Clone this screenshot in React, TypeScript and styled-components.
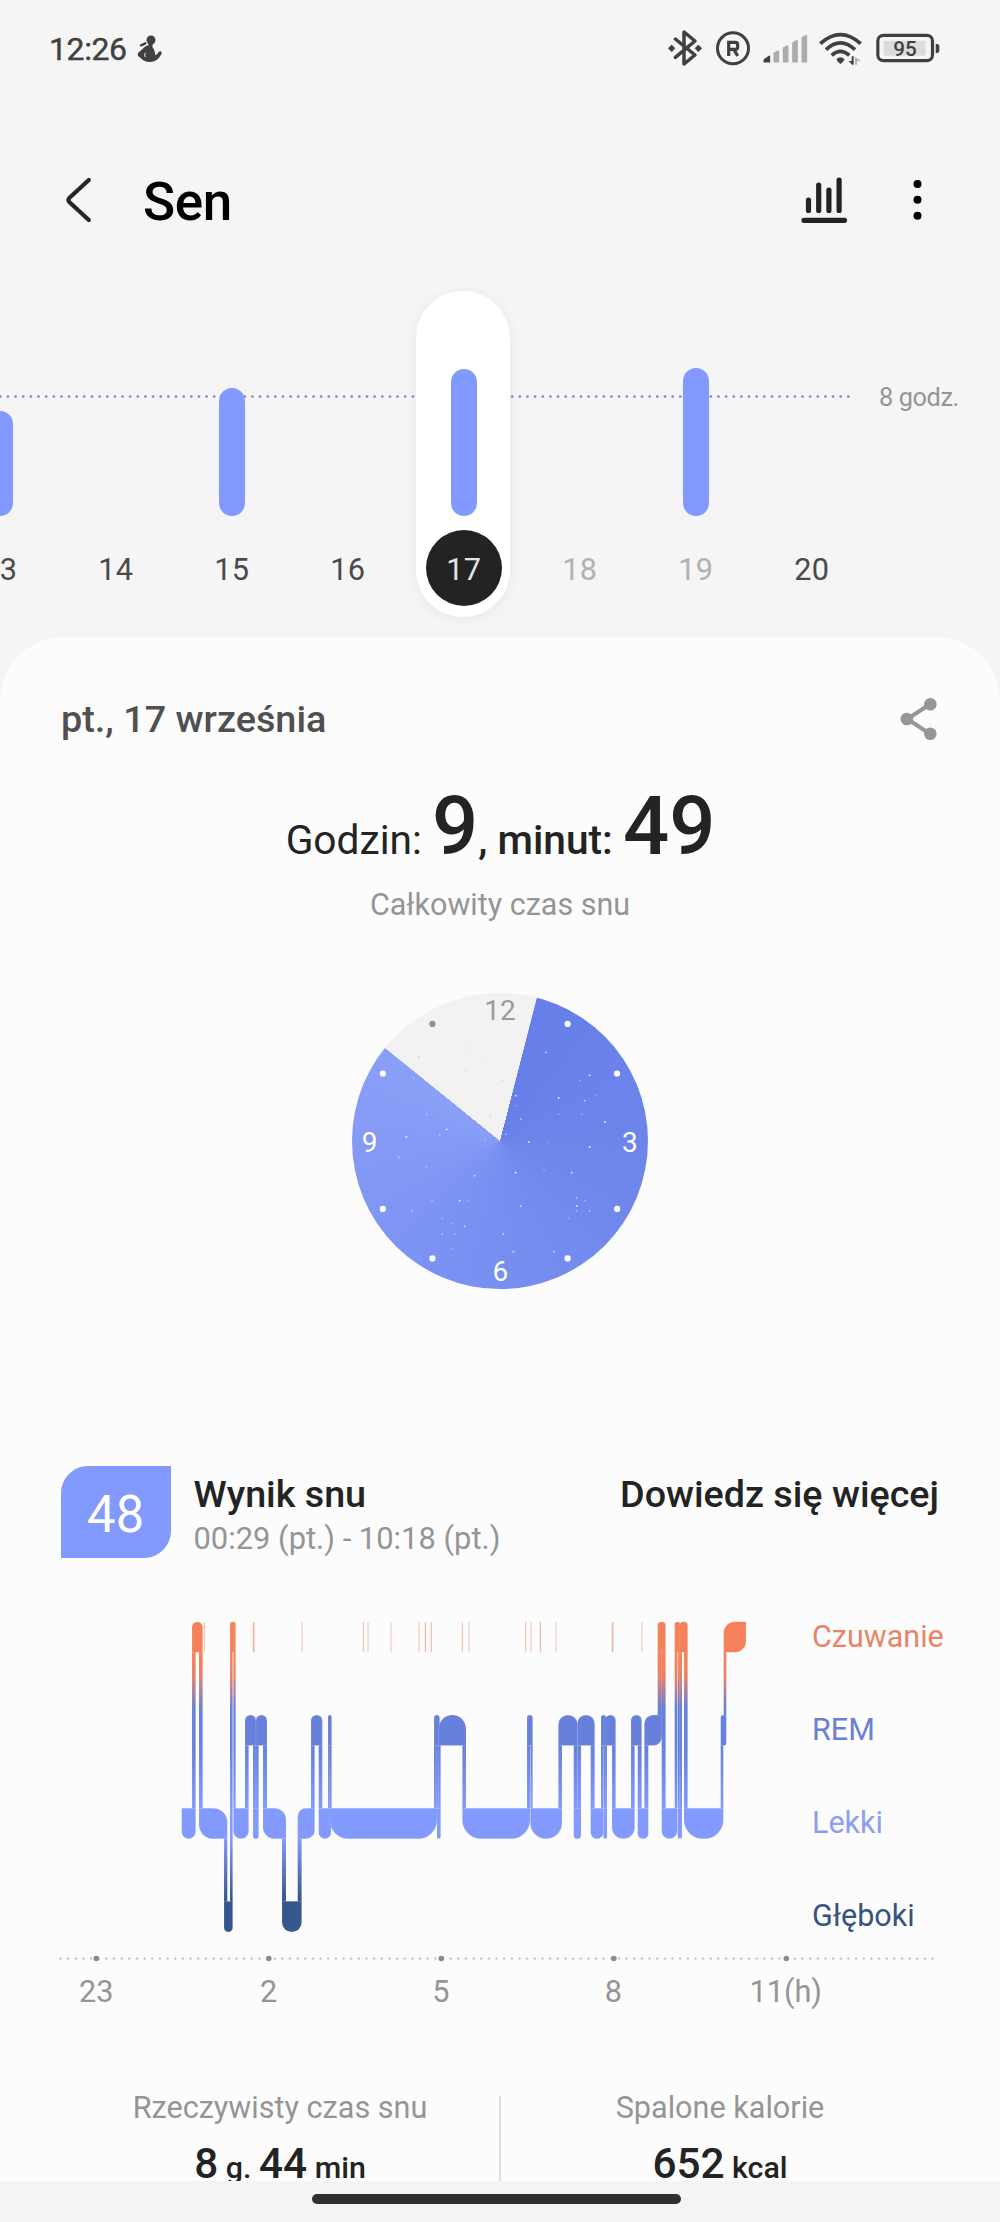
import React from "react";
import styled, { createGlobalStyle } from "styled-components";

const GlobalStyle = createGlobalStyle`
  *, *::before, *::after { box-sizing: border-box; }
  body { margin: 0; background: #f5f5f5; font-family: Roboto, "Noto Sans", sans-serif; }
  svg { display: block; overflow: visible; }
`;

const colors = {
  wake: "#f5815b",
  rem: "#6680db",
  light: "#8299fd",
  deep: "#35578b",
  ink: "#232323",
  muted: "#959595",
};

const Screen = styled.main`
  width: 1000px;
  height: 2222px;
  display: flex;
  flex-direction: column;
  overflow: hidden;
  background: #f5f5f5;
`;

/* ---------- status bar ---------- */

const StatusBar = styled.div`
  height: 98px;
  flex: none;
  display: flex;
  align-items: center;
  justify-content: space-between;
  padding: 0 60px 0 49px;
`;

const StatusLeft = styled.div`
  display: flex;
  align-items: center;
  gap: 10px;
`;

const Time = styled.span`
  font-size: 32px;
  line-height: 40px;
  font-weight: 400;
  letter-spacing: -0.4px;
  color: #404040;
  -webkit-text-stroke: 0.4px #404040;
`;

const StatusIcons = styled.div`
  display: flex;
  align-items: center;
  gap: 14px;
  padding-bottom: 1px;
`;

const SignalSlot = styled.div`
  margin: 0 -3px 0 -1px;
`;

/* ---------- header ---------- */

const Header = styled.header`
  height: 204px;
  flex: none;
  display: flex;
  align-items: center;
  padding: 0 78px 0 65px;
`;

const Title = styled.h1`
  margin: 4px auto 0 52px;
  font-size: 53px;
  line-height: 64px;
  font-weight: 500;
  letter-spacing: -0.4px;
  color: #000;
`;

const HeaderActions = styled.div`
  display: flex;
  align-items: center;
  gap: 66px;
`;

/* ---------- week strip ---------- */

const Week = styled.section`
  position: relative;
  height: 335px;
  flex: none;
`;

const GoalLine = styled.div`
  position: absolute;
  left: 0;
  right: 61px;
  top: 75px;
  height: 40px;
  display: flex;
  align-items: center;
  justify-content: space-between;
`;

const GoalLabel = styled.span`
  width: 60px;
  margin-top: 2px;
  font-size: 25.3px;
  line-height: 40px;
  letter-spacing: -0.4px;
  color: ${colors.muted};
  white-space: nowrap;
`;

const Days = styled.div`
  position: relative;
  display: flex;
  width: 928px;
  margin-left: -58.3px;
`;

const Day = styled.div`
  position: relative;
  width: 116px;
  height: 335px;
  display: flex;
  flex-direction: column;
  align-items: center;
`;

const Capsule = styled.div`
  position: absolute;
  top: -11px;
  left: 10px;
  width: 94.5px;
  height: 326px;
  border-radius: 48px;
  background: #fff;
  box-shadow: 0 2px 14px rgba(0, 0, 0, 0.06);
`;

const BarArea = styled.div`
  position: relative;
  height: 214px;
  display: flex;
  align-items: flex-end;
`;

const DayBar = styled.div<{ $height: number }>`
  width: 26px;
  height: ${(p) => p.$height}px;
  border-radius: 13px;
  background: ${colors.light};
`;

const DayNumber = styled.div<{ $tone: "normal" | "dim" | "selected" }>`
  position: relative;
  margin-top: 14px;
  width: 76px;
  height: 76px;
  border-radius: 50%;
  display: flex;
  align-items: center;
  justify-content: center;
  padding-top: 2px;
  font-size: 30.7px;
  letter-spacing: 0.2px;
  background: ${(p) => (p.$tone === "selected" ? colors.ink : "transparent")};
  color: ${(p) =>
    p.$tone === "selected" ? "#e3e3e3" : p.$tone === "dim" ? "#b2b2b2" : "#4a4a4a"};
`;

/* ---------- detail panel ---------- */

const Panel = styled.section`
  height: 1544px;
  flex: none;
  overflow: hidden;
  padding: 52px 61px 0;
  border-radius: 64px 64px 0 0;
  background: #fcfcfc;
`;

const DateRow = styled.div`
  height: 60px;
  display: flex;
  align-items: center;
  justify-content: space-between;
`;

const DateText = styled.h2`
  margin: 0;
  font-size: 37.8px;
  line-height: 60px;
  font-weight: 500;
  color: #505050;
`;

const Total = styled.div`
  height: 100px;
  margin: 28px 0 0 1px;
  text-align: center;
  font-size: 81.3px;
  line-height: 100px;
  font-weight: 500;
  color: ${colors.ink};
  white-space: nowrap;
`;

const TotalUnit = styled.span<{ $weight: number }>`
  font-size: 40.7px;
  line-height: 0;
  font-weight: ${(p) => p.$weight};
`;

const TotalCaption = styled.div`
  height: 40px;
  margin-top: 8px;
  text-align: center;
  font-size: 30.5px;
  line-height: 40px;
  color: ${colors.muted};
`;

const Dial = styled.div`
  width: 296px;
  height: 296px;
  margin: 68px auto 0;
  border-radius: 50%;
  background: conic-gradient(
    #f2f2f2 0deg 14.3deg,
    #667ee8 14.6deg,
    #7088ec 120deg,
    #7991f2 200deg,
    #8a9ff7 308.8deg,
    #f2f2f2 309.1deg 360deg
  );
`;

const ScoreRow = styled.div`
  height: 92px;
  margin-top: 177px;
  display: flex;
`;

const ScoreBadge = styled.div`
  width: 109.5px;
  height: 92px;
  display: flex;
  align-items: center;
  justify-content: center;
  padding-top: 4px;
  border-radius: 27px 0;
  background: ${colors.light};
  color: #fff;
  font-size: 51px;
`;

const ScoreText = styled.div`
  margin-left: 23px;
  padding-top: 5px;
  display: flex;
  flex-direction: column;
  gap: 1px;
`;

const Strong = styled.div`
  font-size: 37.7px;
  line-height: 46px;
  font-weight: 500;
  color: ${colors.ink};
  white-space: nowrap;
`;

const Range = styled.div`
  font-size: 30.9px;
  line-height: 42px;
  color: ${colors.muted};
  white-space: nowrap;
`;

const MoreLink = styled(Strong)`
  margin: 5px 0 0 auto;
`;

const StageChart = styled.div`
  height: 350px;
  margin-top: 42px;
  display: flex;
  justify-content: space-between;
`;

const Legend = styled.div`
  width: 127px;
  padding-top: 17px;
  display: flex;
  flex-direction: column;
  gap: 53.1px;
`;

const LegendItem = styled.span<{ $color: string }>`
  font-size: 30.5px;
  line-height: 40px;
  color: ${(p) => p.$color};
  white-space: nowrap;
`;

const AxisLabels = styled.div`
  display: grid;
  grid-template-columns: repeat(5, 172.4px);
  margin: 4px 0 0 -51px;
`;

const AxisLabel = styled.span`
  font-size: 30.7px;
  line-height: 40px;
  text-align: center;
  color: ${colors.muted};
`;

const Stats = styled.div`
  margin-top: 76px;
  display: grid;
  grid-template-columns: 1fr 2px 1fr;
`;

const Divider = styled.div`
  margin-top: 8px;
  background: #dfdfdf;
`;

const Stat = styled.div`
  text-align: center;
`;

const StatLabel = styled.div`
  font-size: 30.6px;
  line-height: 40px;
  color: ${colors.muted};
`;

const StatValue = styled.div`
  margin-top: 11px;
  height: 50px;
  font-size: 42.3px;
  line-height: 50px;
  font-weight: 500;
  color: ${colors.ink};
`;

const StatUnit = styled.span`
  font-size: 30.4px;
  line-height: 0;
`;

const NavBar = styled.footer`
  flex: 1;
  display: flex;
  justify-content: center;
  padding: 13px 7px 0 0;
  background: #f4f4f4;
`;

const NavHandle = styled.div`
  width: 369px;
  height: 10px;
  border-radius: 5px;
  background: #303030;
`;

/* ---------- icons ---------- */

const dark = "#404040";

const FigureIcon = () => (
  <svg width="25" height="28" viewBox="413 103 75 84">
    <circle cx="455" cy="118" r="13.5" fill={dark} />
    <path d="M447 128 L461 128 L459 139 Q467 146 467 164 L474 160 Q478 150 484 152 Q490 155 484 164 Q474 184 452 184 Q434 184 424 172 Q411 164 417 156 L436 139 Q443 134 447 135Z" fill={dark} />
    <path d="M425 134 L438 128" stroke={dark} strokeWidth="7" strokeLinecap="round" />
    <path d="M439 156 Q433 161 438 169" stroke="#f5f5f5" strokeWidth="3" fill="none" />
  </svg>
);

const BluetoothIcon = () => (
  <svg width="34" height="37" viewBox="205 90 102 111">
    <path d="M227 117 L286 165 L253 192 V96 L286 123 L227 172" fill="none" stroke={dark} strokeWidth="10.5" strokeLinejoin="round" strokeLinecap="round" />
    <path d="M206 145 L216 135 L226 145 L216 155Z M286 145 L296 135 L306 145 L296 155Z" fill={dark} stroke={dark} strokeWidth="2" strokeLinejoin="round" />
  </svg>
);

const RegisteredIcon = () => (
  <svg width="34" height="37" viewBox="348 90 102 111">
    <circle cx="399" cy="145" r="46.5" fill="none" stroke={dark} strokeWidth="9" />
    <path d="M386 168 V127 H406 Q413 127 413 134 V141 Q413 148 406 148 H386 M402 149 L413 168" fill="none" stroke={dark} strokeWidth="9.5" />
  </svg>
);

const SignalIcon = () => (
  <svg width="45" height="37" viewBox="489 90 135 111" strokeLinejoin="round" strokeWidth="5">
    <path d="M493 185 V180 L508 169 V185Z" fill={dark} stroke={dark} />
    <g fill="#acacac" stroke="#acacac">
      <path d="M523 185 V160 L535 154 V185Z" />
      <path d="M551 185 V144 L563 138 V185Z" />
      <path d="M579 185 V129 L591 122 V185Z" />
      <path d="M607 185 V113 L619 107 V185Z" />
    </g>
  </svg>
);

const WifiIcon = () => (
  <svg width="43" height="37" viewBox="657 90 129 111">
    <g fill="none" stroke={dark} strokeWidth="11">
      <path d="M661 131 Q721 77 782 131" />
      <path d="M678 149 Q721 108 765 149" />
      <path d="M695 166 Q721 142 748 166" />
    </g>
    <path d="M709 178 Q721 166 734 178 Q731 185 721 192 Q712 185 709 178Z" fill={dark} />
    <path d="M755 169 H761 V194 H756 L746 183 H755Z" fill={dark} />
    <path d="M765 194 V170 L782 182 L771 184 V194Z" fill="#b5b5b5" />
  </svg>
);

const BatteryText = styled.text`
  font-family: Roboto, sans-serif;
  font-size: 62px;
  font-weight: 500;
  fill: ${dark};
`;

const BatteryIcon = () => (
  <svg width="64" height="37" viewBox="827 90 192 111">
    <rect x="832.5" y="106" width="164" height="76" rx="17" fill="#f5f5f5" stroke={dark} strokeWidth="9.5" />
    <rect x="850" y="122" width="126" height="45" rx="4" fill="#dcdcdc" />
    <BatteryText x="914" y="167.5" textAnchor="middle">95</BatteryText>
    <path d="M1006 132 H1011 Q1017 133 1017 139 V152 Q1017 158 1011 159 H1006Z" fill={dark} />
  </svg>
);

const BackIcon = () => (
  <svg width="26" height="48" viewBox="0 0 26 48">
    <path d="M23.8 4 L4.3 22 Q2.6 24 4.3 26 L23.8 44" fill="none" stroke="#262626" strokeWidth="4.2" strokeLinecap="round" />
  </svg>
);

const ReportIcon = () => (
  <svg width="46" height="48" viewBox="0 0 46 48">
    <path d="M7.5 24 V34.5 M17.7 9 V34.5 M27.9 14 V34.5 M38.1 4 V34.5 M3 44.3 H43.5" stroke={colors.ink} strokeWidth="5.2" strokeLinecap="round" />
  </svg>
);

const MenuIcon = () => (
  <svg width="9" height="48" viewBox="0 0 9 48">
    <circle cx="4.5" cy="8" r="4" />
    <circle cx="4.5" cy="23.8" r="4" />
    <circle cx="4.5" cy="39.7" r="4" />
  </svg>
);

const ShareIcon = () => (
  <svg width="39" height="44" viewBox="0.7 0 39 44">
    <path d="M31 7 L8 22 L31 37" fill="none" stroke="#969696" strokeWidth="4" />
    <circle cx="31" cy="7.2" r="6.3" fill="#969696" />
    <circle cx="7.5" cy="22" r="6.3" fill="#969696" />
    <circle cx="31" cy="36.8" r="6.3" fill="#969696" />
  </svg>
);

/* ---------- dial ---------- */

const DialNumber = styled.text`
  font-family: Roboto, sans-serif;
  font-size: 28px;
  text-anchor: middle;
`;

/* x, y, opacity of the stars inside the dial, in thirds of a pixel */
const stars: [number, number, number][] = [
  [649, 247, 0.7], [780, 316, 0.9], [750, 332, 0.4], [687, 384, 0.9], [765, 392, 0.6],
  [797, 376, 0.25], [558, 377, 0.8], [558, 407, 0.3], [574, 447, 0.5], [687, 433, 0.35],
  [757, 433, 0.35], [826, 456, 0.8], [528, 493, 0.5], [597, 516, 0.8], [657, 517, 0.3],
  [780, 531, 0.9], [558, 608, 0.95], [643, 601, 0.35], [726, 608, 0.85], [741, 684, 0.45],
  [766, 692, 0.35], [741, 708, 0.8], [741, 722, 0.4], [780, 723, 0.5], [717, 745, 0.3],
  [573, 708, 0.7], [435, 617, 0.7], [291, 592, 0.3], [207, 562, 0.55], [230, 501, 0.8],
  [351, 478, 0.9], [329, 494, 0.45], [291, 433, 0.4], [251, 324, 0.35], [466, 508, 0.3],
  [307, 692, 0.4], [390, 692, 0.95], [414, 692, 0.3], [246, 722, 0.6], [337, 745, 0.35],
  [367, 761, 0.35], [405, 769, 0.7], [337, 792, 0.35], [375, 792, 0.4], [521, 792, 0.65],
  [368, 837, 0.35], [551, 845, 0.7], [673, 845, 0.65],
];

const fadedStars: [number, number, number][] = [
  [305, 202, 2], [414, 234, 3], [268, 262, 5], [468, 270, 2], [407, 300, 3.5],
  [518, 332, 3.5], [482, 440, 4], [507, 472, 2], [377, 338, 2],
];

const hourDots = [30, 60, 120, 150, 210, 240, 300, 330];

const SleepDial = () => (
  <Dial>
    <svg width="296" height="296" viewBox="0 0 296 296">
      <g transform="translate(-22.3 -23) scale(0.33333)">
        {fadedStars.map(([x, y, r]) => (
          <circle key={`${x}-${y}`} cx={x} cy={y} r={r} fill="#e2e2e2" />
        ))}
        {stars.map(([x, y, o]) => (
          <rect key={`${x}-${y}`} x={x - 2.8} y={y - 2.8} width="5.6" height="5.6" rx="2" fill="#fff" opacity={o * 0.9} />
        ))}
      </g>
      {hourDots.map((a) => {
        const r = (a * Math.PI) / 180;
        return (
          <circle
            key={a}
            cx={148 + 135.2 * Math.sin(r)}
            cy={148.2 - 135.4 * Math.cos(r)}
            r="3.1"
            fill={a === 330 ? "#909090" : "#fff"}
          />
        );
      })}
      <DialNumber x="148" y="27.3" fill="#9b9b9b">12</DialNumber>
      <DialNumber x="277.8" y="158.6" fill="#fff">3</DialNumber>
      <DialNumber x="148.3" y="287.8" fill="#fff">6</DialNumber>
      <DialNumber x="17.6" y="158.6" fill="#fff">9</DialNumber>
    </svg>
  </Dial>
);

/* ---------- sleep stages ---------- */

type Stage = 0 | 1 | 2 | 3; // awake, REM, light, deep

/* start, end (in thirds of a pixel), stage */
const segments: [number, number, Stage][] = [
  [65, 107, 2], [96, 128, 0], [117, 202, 2], [192, 218, 3], [210, 227, 0], [220, 266, 2],
  [255, 288, 1], [279, 296, 2], [288, 321, 1], [309, 378, 2], [366, 425, 3], [413, 464, 2],
  [453, 487, 1], [476, 513, 2], [504, 515, 1], [509, 831, 2], [822, 839, 1], [831, 842, 2],
  [836, 918, 1], [907, 1110, 2], [1101, 1118, 1], [1111, 1206, 2], [1195, 1253, 1],
  [1241, 1263, 2], [1252, 1304, 1], [1292, 1330, 2], [1323, 1338, 1], [1330, 1341, 2],
  [1335, 1367, 1], [1356, 1424, 2], [1413, 1445, 1], [1433, 1465, 2], [1453, 1506, 1],
  [1493, 1517, 0], [1505, 1552, 2], [1544, 1561, 0], [1553, 1566, 2], [1559, 1583, 0],
  [1572, 1690, 2], [1682, 1699, 1], [1691, 1758, 0],
];

/* position, width, opacity of brief awakenings */
const awakenings: [number, number, number][] = [
  [133, 3, 0.55], [281, 5, 0.65], [426, 4, 0.4], [610, 3, 0.6], [624, 4, 0.4], [693, 4, 0.4],
  [777, 4, 0.4], [796, 3, 0.75], [814, 4, 0.5], [907, 3, 0.6], [927, 4, 0.4], [1097, 4, 0.5],
  [1113, 4, 0.4], [1141, 3, 0.75], [1188, 4, 0.4], [1358, 5, 0.65], [1446, 4, 0.4],
];

const BAND = 92;
const bandTop = (s: Stage) => 65 + s * 279.7;

/* A corner is square where a connector leaves the band, and round elsewhere. */
function bandPath(i: number) {
  const [x0, x1, s] = segments[i];
  const prev = segments[i - 1];
  const next = segments[i + 1];
  const y0 = bandTop(s);
  const y1 = y0 + BAND;
  const r = Math.min((x1 - x0) / 2, 56);
  const tl = prev && prev[2] > s ? r : 0;
  const bl = !prev || prev[2] < s ? r : 0;
  const tr = next && next[2] > s ? r : 0;
  const br = !next || next[2] < s ? r : 0;
  return [
    `M${x0 + tl} ${y0} H${x1 - tr} A${tr} ${tr} 0 0 1 ${x1} ${y0 + tr}`,
    `V${y1 - br} A${br} ${br} 0 0 1 ${x1 - br} ${y1}`,
    `H${x0 + bl} A${bl} ${bl} 0 0 1 ${x0} ${y1 - bl}`,
    `V${y0 + tl} A${tl} ${tl} 0 0 1 ${x0 + tl} ${y0}Z`,
  ].join(" ");
}

const Hypnogram = () => (
  <svg width="700" height="350" viewBox="-297 0 2100 1050">
    <defs>
      <linearGradient id="stages" gradientUnits="userSpaceOnUse" x1="0" y1="65" x2="0" y2="996">
        <stop offset="0" stopColor={colors.wake} />
        <stop offset="0.13" stopColor={colors.wake} />
        <stop offset="0.18" stopColor="#e5826c" />
        <stop offset="0.28" stopColor={colors.rem} />
        <stop offset="0.4" stopColor={colors.rem} />
        <stop offset="0.6" stopColor={colors.light} />
        <stop offset="0.7" stopColor={colors.light} />
        <stop offset="0.895" stopColor={colors.deep} />
        <stop offset="1" stopColor={colors.deep} />
      </linearGradient>
    </defs>
    {awakenings.map(([x, w, o]) => (
      <rect key={x} x={x - w / 2} y="66" width={w} height="91" fill="#e88f75" opacity={o} />
    ))}
    <g fill="url(#stages)" stroke="#fcfcfc" strokeOpacity="0.22" strokeWidth="1.5">
      {segments.map((seg, i) => {
        const next = segments[i + 1];
        const upper = next ? (Math.min(seg[2], next[2]) as Stage) : 0;
        const lower = next ? (Math.max(seg[2], next[2]) as Stage) : 0;
        return (
          <React.Fragment key={i}>
            <path d={bandPath(i)} />
            {next && (
              <rect
                x={next[0]}
                y={bandTop(upper) + BAND - 1}
                width={Math.max(seg[1] - next[0], 5)}
                height={bandTop(lower) - bandTop(upper) - BAND + 2}
              />
            )}
          </React.Fragment>
        );
      })}
    </g>
  </svg>
);

const TimeAxis = () => (
  <svg width="878" height="18" viewBox="61 0 878 18">
    {Array.from({ length: 115 }, (_, i) => (
      <circle key={i} cx={60.5 + i * 7.65} cy="8.5" r="1.2" fill="#c6c6c6" />
    ))}
    {[0, 1, 2, 3, 4].map((i) => (
      <circle key={i} cx={96.3 + i * 172.5} cy="8.5" r="2.8" fill="#8a8a8a" />
    ))}
  </svg>
);

/* ---------- data ---------- */

const days: { label: string; bar: number; tone: "normal" | "dim" | "selected" }[] = [
  { label: "13", bar: 105, tone: "normal" },
  { label: "14", bar: 0, tone: "normal" },
  { label: "15", bar: 128.5, tone: "normal" },
  { label: "16", bar: 0, tone: "normal" },
  { label: "17", bar: 147, tone: "selected" },
  { label: "18", bar: 0, tone: "dim" },
  { label: "19", bar: 148, tone: "dim" },
  { label: "20", bar: 0, tone: "normal" },
];

const legend = [
  { label: "Czuwanie", color: "#ea8468" },
  { label: "REM", color: "#6b80d3" },
  { label: "Lekki", color: "#8d9df2" },
  { label: "Głęboki", color: "#36537f" },
];

export default function App() {
  return (
    <Screen>
      <GlobalStyle />
      <StatusBar>
        <StatusLeft>
          <Time>12:26</Time>
          <FigureIcon />
        </StatusLeft>
        <StatusIcons>
          <BluetoothIcon />
          <RegisteredIcon />
          <SignalSlot>
            <SignalIcon />
          </SignalSlot>
          <WifiIcon />
          <BatteryIcon />
        </StatusIcons>
      </StatusBar>

      <Header>
        <BackIcon />
        <Title>Sen</Title>
        <HeaderActions>
          <ReportIcon />
          <MenuIcon />
        </HeaderActions>
      </Header>

      <Week>
        <GoalLine>
          <svg width="850" height="4" viewBox="0 0 850 4">
            {Array.from({ length: 112 }, (_, i) => (
              <circle key={i} cx={i * 7.64 + 0.3} cy="1.5" r="1.35" fill="#7a86c9" />
            ))}
          </svg>
          <GoalLabel>8 godz.</GoalLabel>
        </GoalLine>
        <Days>
          {days.map((d) => (
            <Day key={d.label}>
              {d.tone === "selected" && <Capsule />}
              <BarArea>{d.bar > 0 && <DayBar $height={d.bar} />}</BarArea>
              <DayNumber $tone={d.tone}>{d.label}</DayNumber>
            </Day>
          ))}
        </Days>
      </Week>

      <Panel>
        <DateRow>
          <DateText>pt., 17 września</DateText>
          <ShareIcon />
        </DateRow>
        <Total>
          <TotalUnit $weight={400}>Godzin: </TotalUnit>9
          <TotalUnit $weight={500}>, minut: </TotalUnit>49
        </Total>
        <TotalCaption>Całkowity czas snu</TotalCaption>
        <SleepDial />

        <ScoreRow>
          <ScoreBadge>48</ScoreBadge>
          <ScoreText>
            <Strong>Wynik snu</Strong>
            <Range>00:29 (pt.) - 10:18 (pt.)</Range>
          </ScoreText>
          <MoreLink>Dowiedz się więcej</MoreLink>
        </ScoreRow>

        <StageChart>
          <Hypnogram />
          <Legend>
            {legend.map((l) => (
              <LegendItem key={l.label} $color={l.color}>
                {l.label}
              </LegendItem>
            ))}
          </Legend>
        </StageChart>
        <TimeAxis />
        <AxisLabels>
          {["23", "2", "5", "8", "11(h)"].map((t) => (
            <AxisLabel key={t}>{t}</AxisLabel>
          ))}
        </AxisLabels>

        <Stats>
          <Stat>
            <StatLabel>Rzeczywisty czas snu</StatLabel>
            <StatValue>
              8<StatUnit> g. </StatUnit>44<StatUnit> min</StatUnit>
            </StatValue>
          </Stat>
          <Divider />
          <Stat>
            <StatLabel>Spalone kalorie</StatLabel>
            <StatValue>
              652<StatUnit> kcal</StatUnit>
            </StatValue>
          </Stat>
        </Stats>
      </Panel>

      <NavBar>
        <NavHandle />
      </NavBar>
    </Screen>
  );
}
